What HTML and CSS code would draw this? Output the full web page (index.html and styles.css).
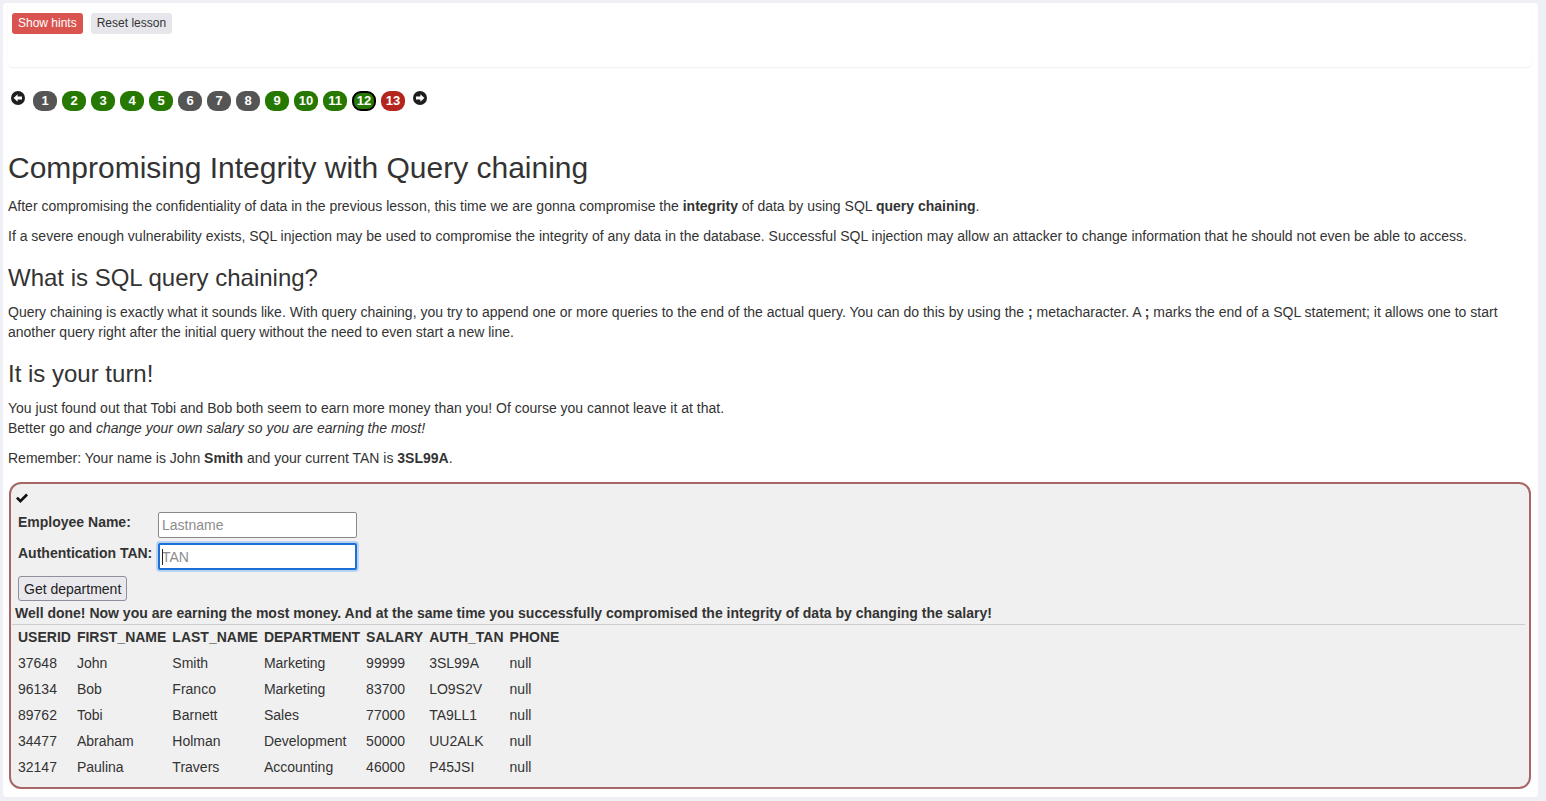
FILE: index.html
```html
<!DOCTYPE html>
<html lang="en">
<head>
<meta charset="utf-8">
<title>SQL Injection (intro)</title>
<link rel="stylesheet" href="styles.css">
</head>
<body>
<div class="panel">
  <div class="top-card">
    <button class="btn btn-hints">Show hints</button>
    <button class="btn btn-reset">Reset lesson</button>
  </div>

  <div class="pager">
    <span class="arrow">
      <svg width="14" height="14" viewBox="0 0 14 14"><circle cx="7" cy="7" r="7" fill="#1e1e1e"/><path d="M2.6 7 L6.6 3.2 V5.6 H11 V8.4 H6.6 V10.8 Z" fill="#fff"/></svg>
    </span>
    <span class="pg gray">1</span>
    <span class="pg green">2</span>
    <span class="pg green">3</span>
    <span class="pg green">4</span>
    <span class="pg green">5</span>
    <span class="pg gray">6</span>
    <span class="pg gray">7</span>
    <span class="pg gray">8</span>
    <span class="pg green">9</span>
    <span class="pg green">10</span>
    <span class="pg green">11</span>
    <span class="pg green current">12</span>
    <span class="pg red">13</span>
    <span class="arrow arrow-right">
      <svg width="14" height="14" viewBox="0 0 14 14"><circle cx="7" cy="7" r="7" fill="#1e1e1e"/><path d="M11.4 7 L7.4 3.2 V5.6 H3 V8.4 H7.4 V10.8 Z" fill="#fff"/></svg>
    </span>
  </div>

  <div class="lesson">
    <h1>Compromising Integrity with Query chaining</h1>
    <p>After compromising the confidentiality of data in the previous lesson, this time we are gonna compromise the <strong>integrity</strong> of data by using SQL <strong>query chaining</strong>.</p>
    <p>If a severe enough vulnerability exists, SQL injection may be used to compromise the integrity of any data in the database. Successful SQL injection may allow an attacker to change information that he should not even be able to access.</p>

    <h2>What is SQL query chaining?</h2>
    <p>Query chaining is exactly what it sounds like. With query chaining, you try to append one or more queries to the end of the actual query. You can do this by using the <strong>;</strong> metacharacter. A <strong>;</strong> marks the end of a SQL statement; it allows one to start another query right after the initial query without the need to even start a new line.</p>

    <h2>It is your turn!</h2>
    <p>You just found out that Tobi and Bob both seem to earn more money than you! Of course you cannot leave it at that.<br>Better go and <em>change your own salary so you are earning the most!</em></p>
    <p>Remember: Your name is John <strong>Smith</strong> and your current TAN is <strong>3SL99A</strong>.</p>
  </div>

  <div class="attack">
    <div class="check">
      <svg width="12" height="11" viewBox="0 0 12 11"><path d="M0 5.6 L1.9 3.7 L4.4 6.2 L10.1 0.5 L12 2.4 L4.4 10 Z" fill="#111"/></svg>
    </div>
    <form class="attack-form">
      <label class="lbl">Employee Name:</label>
      <input class="field" type="text" placeholder="Lastname">
      <label class="lbl">Authentication TAN:</label>
      <span class="focus-wrap"><input class="field focused" type="text" placeholder="TAN"><span class="caret"></span></span>
      <button type="button" class="submit">Get department</button>
    </form>
    <div class="feedback">Well done! Now you are earning the most money. And at the same time you successfully compromised the integrity of data by changing the salary!</div>
    <hr class="sep">
    <table class="results">
      <tr><th>USERID</th><th>FIRST_NAME</th><th>LAST_NAME</th><th>DEPARTMENT</th><th>SALARY</th><th>AUTH_TAN</th><th>PHONE</th></tr>
      <tr><td>37648</td><td>John</td><td>Smith</td><td>Marketing</td><td>99999</td><td>3SL99A</td><td>null</td></tr>
      <tr><td>96134</td><td>Bob</td><td>Franco</td><td>Marketing</td><td>83700</td><td>LO9S2V</td><td>null</td></tr>
      <tr><td>89762</td><td>Tobi</td><td>Barnett</td><td>Sales</td><td>77000</td><td>TA9LL1</td><td>null</td></tr>
      <tr><td>34477</td><td>Abraham</td><td>Holman</td><td>Development</td><td>50000</td><td>UU2ALK</td><td>null</td></tr>
      <tr><td>32147</td><td>Paulina</td><td>Travers</td><td>Accounting</td><td>46000</td><td>P45JSI</td><td>null</td></tr>
    </table>
  </div>
</div>
</body>
</html>
```

FILE: styles.css
```css
html, body {
  margin: 0;
  padding: 0;
}
body {
  background: #eef0f6;
  font-family: "Liberation Sans", Arial, sans-serif;
  font-size: 14px;
  line-height: 20px;
  color: #333;
}
.panel {
  margin: 3px 8px 0 3px;
  padding: 0 6px 8px 5px;
  background: #fff;
  border-radius: 4px;
  min-height: 785px;
}
.top-card {
  padding: 10px 4px 0 4px;
  height: 54px;
  background: #fff;
  border-radius: 0 0 6px 6px;
  box-shadow: 0 1px 2px rgba(0, 0, 0, 0.07);
  display: flex;
  align-items: flex-start;
  gap: 8px;
}
.btn {
  font-family: "Liberation Sans", Arial, sans-serif;
  font-size: 12px;
  line-height: 17px;
  padding: 2px 6px;
  border: 0;
  border-radius: 3px;
  cursor: pointer;
}
.btn-hints {
  background: #d9534f;
  color: #fff;
}
.btn-reset {
  background: #e6e6eb;
  color: #333;
}
.pager {
  margin-top: 24px;
  padding-left: 3px;
  display: flex;
  align-items: flex-start;
  gap: 5px;
  height: 20px;
}
.arrow {
  display: flex;
  width: 14px;
  height: 14px;
  margin-right: 3px;
}
.arrow-right {
  margin-left: 3px;
  margin-right: 0;
}
.pg {
  box-sizing: border-box;
  width: 24px;
  height: 20px;
  line-height: 20px;
  border-radius: 9px;
  text-align: center;
  font-weight: bold;
  font-size: 13px;
  color: #fff;
}
.pg.gray { background: #555; }
.pg.green { background: #267800; }
.pg.red { background: #b3261e; }
.pg.current {
  border: 2px solid #000;
  line-height: 16px;
}
.lesson {
  padding-top: 19px;
}
h1 {
  font-size: 30px;
  font-weight: 500;
  line-height: 36px;
  margin: 20px 0 10px;
  color: #333;
}
h2 {
  font-size: 24px;
  font-weight: 500;
  line-height: 29px;
  margin: 17px 0 10px;
  color: #333;
}
p {
  margin: 0 0 10px;
}
.attack {
  margin: 14px 1px 0 1px;
  border: 2px solid #a86565;
  border-radius: 12px;
  background: #f0f0f0;
  padding: 4px 4px 7px 4px;
}
.check {
  height: 20px;
  display: flex;
  align-items: center;
  padding-left: 1px;
}
.attack-form {
  margin-top: 4px;
  padding-left: 3px;
  display: grid;
  grid-template-columns: 140px 200px;
  row-gap: 5px;
  justify-items: start;
}
.lbl {
  font-weight: bold;
  line-height: 20px;
}
.field {
  box-sizing: border-box;
  width: 199px;
  height: 26px;
  margin: 0;
  border: 1px solid #8a8a8a;
  border-radius: 2px;
  background: #fff;
  font-family: "Liberation Sans", Arial, sans-serif;
  font-size: 14px;
  padding: 0 3px;
}
.field::placeholder {
  color: #8c8c8c;
}
.focus-wrap {
  position: relative;
  display: block;
}
.field.focused {
  height: 27px;
  border: 2px solid #1a6fd8;
  box-shadow: 0 0 0 2px #b9d4f3;
  padding: 0 2px;
}
.caret {
  position: absolute;
  left: 4px;
  top: 6px;
  width: 1px;
  height: 16px;
  background: #222;
}
.submit {
  grid-column: 1 / 2;
  margin-top: 1px;
  height: 25px;
  padding: 0 5px;
  border: 1px solid #8f8f9d;
  border-radius: 3px;
  background: #e9e9ed;
  font-family: "Liberation Sans", Arial, sans-serif;
  font-size: 14px;
  color: #222;
}
.feedback {
  font-weight: bold;
  margin-top: 2px;
}
.sep {
  border: 0;
  border-top: 1px solid #cccccc;
  margin: 1px 0 0 -3px;
}
.results {
  border-collapse: collapse;
  margin-top: -1px;
}
.results th, .results td {
  padding: 3px;
  text-align: left;
  white-space: nowrap;
}
.results th {
  font-weight: bold;
}
```
